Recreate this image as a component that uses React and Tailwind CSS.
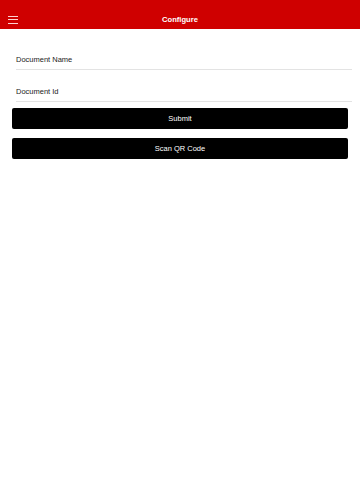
import React, { useState } from 'react';

const Field = ({ label, value, onChange }) => (
  <div className="h-[32px] flex items-end border-b border-[#e3e3e3] pb-[4px]">
    <input
      type="text"
      placeholder={label}
      value={value}
      onChange={(e) => onChange(e.target.value)}
      className="w-full bg-transparent outline-none text-[7.5px] leading-[10px] text-[#222] placeholder:text-[#222]"
    />
  </div>
);

const App = () => {
  const [name, setName] = useState('');
  const [docId, setDocId] = useState('');

  return (
    <div className="min-h-[480px] bg-white font-['Liberation_Sans',Arial,sans-serif]">
      {/* Header */}
      <header className="h-[29px] bg-[#cf0000] flex items-center relative">
        <button className="ml-[8px] mt-[10px] w-[10px] flex flex-col gap-[2.5px]">
          <span className="block h-[1px] bg-[#ffd0d0]" />
          <span className="block h-[1px] bg-[#ffd0d0]" />
          <span className="block h-[1px] bg-[#ffd0d0]" />
        </button>
        <h1 className="absolute inset-x-0 top-[15px] text-center text-white font-bold text-[7.6px] leading-[10px] pointer-events-none">
          Configure
        </h1>
      </header>

      {/* Form */}
      <div className="pt-[9px]">
        <div className="pl-[16px] pr-[8px]">
          <Field label="Document Name" value={name} onChange={setName} />
          <Field label="Document Id" value={docId} onChange={setDocId} />
        </div>
        <div className="px-[12px] mt-[6px] flex flex-col gap-[9px]">
          <button className="h-[21px] w-full bg-black rounded-[2px] text-white text-[7.5px]">Submit</button>
          <button className="h-[21px] w-full bg-black rounded-[2px] text-white text-[7.5px]">Scan QR Code</button>
        </div>
      </div>
    </div>
  );
};

export default App;
